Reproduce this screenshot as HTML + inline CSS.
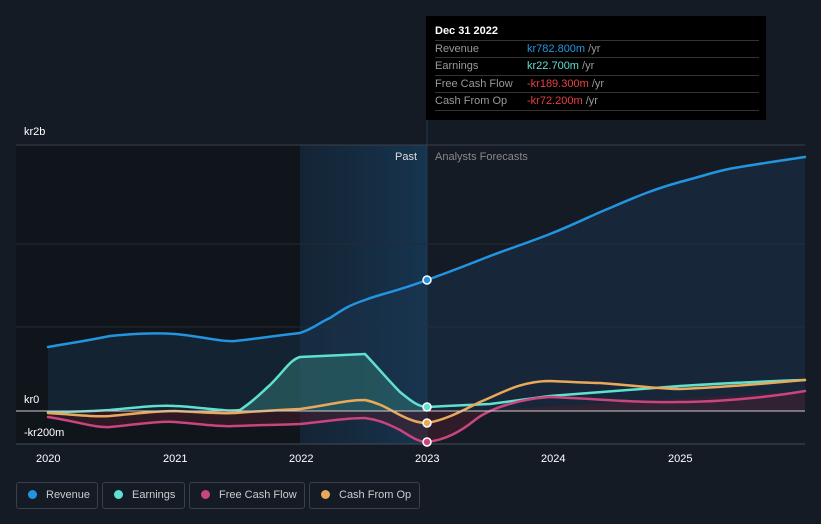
<!DOCTYPE html><html><head><style>
body{margin:0;background:#151b25;width:821px;height:524px;overflow:hidden;font-family:"Liberation Sans",sans-serif;}
.tip{position:absolute;left:426px;top:16px;width:340px;height:104px;background:#000;}
.tip .h{color:#fff;font-size:11px;font-weight:bold;position:absolute;left:9px;top:9px}
.row{position:absolute;left:9px;width:324px;border-top:1px solid #333;height:17px;font-size:11px;color:#999;line-height:17px}
.row span{position:absolute;left:92px}
.leg{position:absolute;top:482px;height:27px;border:1px solid #3a3f48;border-radius:3px;color:#ccc;font-size:11px;line-height:25px;box-sizing:border-box;white-space:nowrap}
.leg i{display:inline-block;width:9px;height:9px;border-radius:50%;margin:0 9px 0 11px;vertical-align:-1px}
</style></head><body>
<svg width="821" height="524" style="position:absolute;left:0;top:0">
<defs><linearGradient id="p" x1="0" x2="1"><stop offset="0" stop-color="#142a40" stop-opacity=".6"/><stop offset="1" stop-color="#16354f"/></linearGradient></defs>
<rect x="16" y="145" width="284" height="299" fill="#10141b"/>
<rect x="300" y="145" width="127" height="299" fill="url(#p)"/>
<line x1="427" y1="16" x2="427" y2="444" stroke="#1d3a55" stroke-width="1"/>
<g stroke="#232a36" stroke-width="1"><line x1="16" y1="145" x2="805" y2="145" stroke="#3a404a"/><line x1="16" y1="244" x2="805" y2="244"/><line x1="16" y1="327" x2="805" y2="327"/></g>
<path d="M48,347 C65,344 80,342 110,336 C140,333 160,333 175,334 C200,336 220,342 235,341 C255,339 265,337 300,333 C315,328 320,322 330,318 C345,308 350,305 365,300 C380,294 395,292 427,280 C460,268 470,264 490,256 C520,245 535,240 550,234 C580,222 590,216 610,208 C640,195 655,189 680,182 C710,174 720,170 740,167 C770,162 785,160 805,157 L805,411 L48,411Z" fill="#1a3550" opacity=".45"/>
<path d="M240,410 C255,400 262,392 270,385 C285,370 290,360 300,357 L365,354 C380,370 390,382 400,392 C410,400 418,407 427,407 L427,411 L240,411Z" fill="#2d6a6a" opacity=".6"/>
<path d="M48,417 C80,422 95,428 110,427 C140,424 160,421 175,422 C200,424 220,427 235,426 C260,425 280,425 300,424 C330,421 345,418 365,418 C380,420 390,425 400,430 C410,436 418,442 427,442 C445,440 460,432 490,410 L805,391 L805,411 L48,411Z" fill="#4a1d2c" opacity=".5"/>
<g fill="none" stroke-width="2.5" stroke-linecap="round">
<path d="M48,347 C65,344 80,342 110,336 C140,333 160,333 175,334 C200,336 220,342 235,341 C255,339 265,337 300,333 C315,328 320,322 330,318 C345,308 350,305 365,300 C380,294 395,292 427,280 C460,268 470,264 490,256 C520,245 535,240 550,234 C580,222 590,216 610,208 C640,195 655,189 680,182 C710,174 720,170 740,167 C770,162 785,160 805,157" stroke="#2394e0"/>
<path d="M48,412 C80,412 95,411 110,410 C140,407 160,405 175,406 C200,407 225,412 240,410 C255,400 262,392 270,385 C285,370 290,360 300,357 L365,354 C380,370 390,382 400,392 C410,400 418,407 427,407 C460,405 470,405 490,404 C520,400 535,398 550,396 C600,392 640,389 680,386 C730,383 770,381 805,380" stroke="#5fe0d0"/>
<path d="M48,417 C80,422 95,428 110,427 C140,424 160,421 175,422 C200,424 220,427 235,426 C260,425 280,425 300,424 C330,421 345,418 365,418 C380,420 390,425 400,430 C410,436 418,442 427,442 C445,440 460,432 475,420 C490,408 520,399 550,397 C600,399 640,403 680,402 C720,402 770,397 805,391" stroke="#c8457e"/>
<path d="M48,413 C80,415 95,417 110,416 C140,413 160,411 175,411 C200,412 220,414 235,413 C260,411 280,410 300,409 C330,405 345,400 365,400 C380,403 390,410 400,415 C410,420 418,423 427,423 C445,420 460,412 480,402 C500,394 520,381 550,381 C575,382 590,383 600,383 C640,386 660,389 680,389 C730,387 770,383 805,380" stroke="#e8a95a"/>
</g>
<line x1="16" y1="411" x2="805" y2="411" stroke="#ccc" stroke-width="1"/>
<line x1="16" y1="444" x2="805" y2="444" stroke="#444b55" stroke-width="1"/>
<g stroke="#fff" stroke-width="1.5"><circle cx="427" cy="280" r="4" fill="#2394e0"/><circle cx="427" cy="407" r="4" fill="#5fe0d0"/><circle cx="427" cy="423" r="4" fill="#e8a95a"/><circle cx="427" cy="442" r="4" fill="#c8457e"/></g>
<g font-size="11" fill="#fff"><text x="24" y="135">kr2b</text><text x="24" y="403">kr0</text><text x="24" y="436">-kr200m</text>
<text x="36" y="462">2020</text><text x="163" y="462">2021</text><text x="289" y="462">2022</text><text x="415" y="462">2023</text><text x="541" y="462">2024</text><text x="668" y="462">2025</text>
<text x="395" y="160" fill="#ddd">Past</text><text x="435" y="160" fill="#888">Analysts Forecasts</text></g>
</svg>
<div class="tip"><div class="h">Dec 31 2022</div>
<div class="row" style="top:24px">Revenue<span style="color:#2394e0">kr782.800m <b style="color:#999;font-weight:normal">/yr</b></span></div>
<div class="row" style="top:41px">Earnings<span style="color:#5fe0d0">kr22.700m <b style="color:#999;font-weight:normal">/yr</b></span></div>
<div class="row" style="top:59px">Free Cash Flow<span style="color:#e84040">-kr189.300m <b style="color:#999;font-weight:normal">/yr</b></span></div>
<div class="row" style="top:76px;border-bottom:1px solid #333">Cash From Op<span style="color:#e84040">-kr72.200m <b style="color:#999;font-weight:normal">/yr</b></span></div>
</div>
<div class="leg" style="left:16px;width:82px"><i style="background:#2394e0"></i>Revenue</div>
<div class="leg" style="left:102px;width:83px"><i style="background:#5fe0d0"></i>Earnings</div>
<div class="leg" style="left:189px;width:116px"><i style="background:#c8457e"></i>Free Cash Flow</div>
<div class="leg" style="left:309px;width:111px"><i style="background:#e8a95a"></i>Cash From Op</div>
</body></html>
